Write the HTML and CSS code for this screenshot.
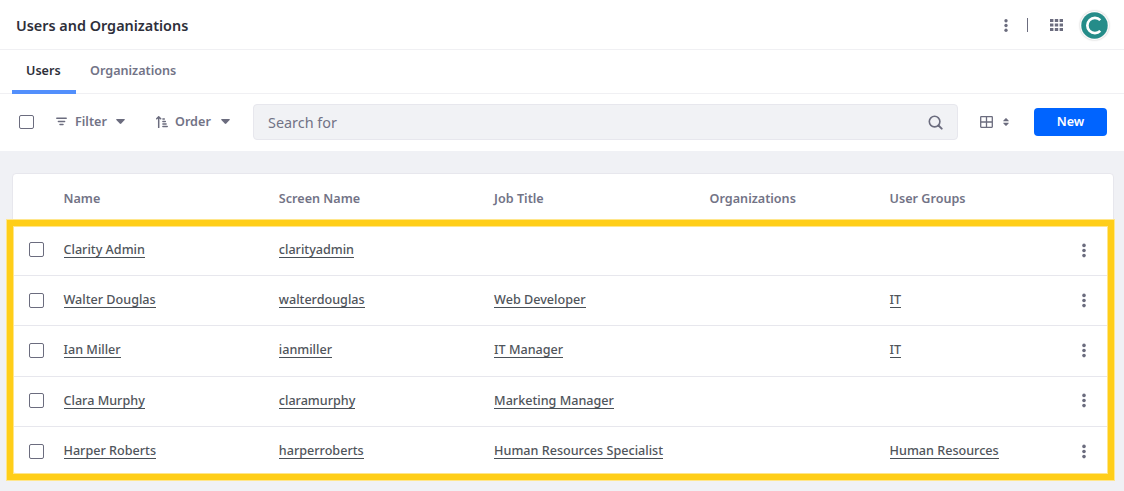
FILE: index.html
```html
<!DOCTYPE html>
<html lang="en">
<head>
<meta charset="utf-8">
<title>Users and Organizations</title>
<link rel="stylesheet" href="styles.css">
</head>
<body>
<svg class="defs" aria-hidden="true">
  <symbol id="dots" viewBox="0 0 4 14"><circle cx="2" cy="1.9" r="1.8"/><circle cx="2" cy="7" r="1.8"/><circle cx="2" cy="12.1" r="1.8"/></symbol>
  <symbol id="caret" viewBox="0 0 9 5"><path d="M.8 0h7.4q1.1 0 .4.9L5.3 4.5q-.8.8-1.6 0L.4.9Q-.3 0 .8 0z"/></symbol>
</svg>
<header class="topbar">
  <h1 class="title">Users and Organizations</h1>
  <svg class="top-dots" width="4" height="13"><use href="#dots"/></svg>
  <span class="divider"></span>
  <svg class="apps" width="13" height="12" viewBox="0 0 13 12"><path d="M0 0h3.4v3H0zM4.8 0h3.4v3H4.8zM9.6 0H13v3H9.6zM0 4.5h3.4v3H0zM4.8 4.5h3.4v3H4.8zM9.6 4.5H13v3H9.6zM0 9h3.4v3H0zM4.8 9h3.4v3H4.8zM9.6 9H13v3H9.6z"/></svg>
  <span class="avatar"><svg width="27" height="27" viewBox="0 0 27 27"><circle cx="13.5" cy="13.5" r="13.2"/><path d="M19.3 8.1A7.6 7.6 0 1 0 19.3 18.9" fill="none" stroke="#fff" stroke-width="2.7"/></svg></span>
</header>
<nav class="tabs">
  <a class="tab active">Users</a>
  <a class="tab">Organizations</a>
</nav>
<div class="toolbar">
  <span class="check"></span>
  <span class="control filter">
    <svg width="11" height="9" viewBox="0 0 11 9"><path d="M.8 1.2h9.4M2.4 4.4h6.2M4 7.6h3" fill="none" stroke="#6b6c7e" stroke-width="1.5" stroke-linecap="round"/></svg>
    <span>Filter</span>
    <svg class="caret" width="9" height="5"><use href="#caret"/></svg>
  </span>
  <span class="control order">
    <svg width="12" height="12" viewBox="0 0 12 12"><path d="M2.7 11.5V1M.7 2.7L2.7.8l2 1.9M6.9 3.1h1.4M6.9 5.6h2.4M6.9 8.1h3.2M6.9 10.5h4.3" fill="none" stroke="#6b6c7e" stroke-width="1.5" stroke-linecap="round"/></svg>
    <span>Order</span>
    <svg class="caret" width="9" height="5"><use href="#caret"/></svg>
  </span>
  <div class="search">
    <span>Search for</span>
    <svg width="15" height="15" viewBox="0 0 15 15"><circle cx="6.6" cy="6.6" r="5.3" fill="none" stroke="#6b6c7e" stroke-width="1.6"/><path d="M10.5 10.5l3.2 3.2" stroke="#6b6c7e" stroke-width="1.9" stroke-linecap="round"/></svg>
  </div>
  <svg class="grid-icon" width="13" height="12" viewBox="0 0 13 12"><path d="M.7 1.2q0-.5.5-.5h10.6q.5 0 .5.5v9.6q0 .5-.5.5H1.2q-.5 0-.5-.5zM6.5.7v10.6M.7 6h11.6" fill="none" stroke="#6b6c7e" stroke-width="1.3"/></svg>
  <svg class="sort" width="6" height="8" viewBox="0 0 6 8"><path d="M.4 3.3Q0 3.2.5 2.5L2.4.4q.6-.6 1.2 0l1.9 2.1q.5.7 0 .8zM.4 4.7h5.2q.4.1-.1.8L3.6 7.6q-.6.6-1.2 0L.5 5.5q-.5-.7-.1-.8z"/></svg>
  <button class="new">New</button>
</div>
<main class="content">
  <div class="card">
    <div class="row head"><span></span><span>Name</span><span>Screen Name</span><span>Job Title</span><span>Organizations</span><span>User Groups</span><span></span></div>
    <div class="row"><span class="check"></span><span><a>Clarity Admin</a></span><span><a>clarityadmin</a></span><span></span><span></span><span></span><svg width="4" height="15"><use href="#dots"/></svg></div>
    <div class="row"><span class="check"></span><span><a>Walter Douglas</a></span><span><a>walterdouglas</a></span><span><a>Web Developer</a></span><span></span><span><a>IT</a></span><svg width="4" height="15"><use href="#dots"/></svg></div>
    <div class="row"><span class="check"></span><span><a>Ian Miller</a></span><span><a>ianmiller</a></span><span><a>IT Manager</a></span><span></span><span><a>IT</a></span><svg width="4" height="15"><use href="#dots"/></svg></div>
    <div class="row"><span class="check"></span><span><a>Clara Murphy</a></span><span><a>claramurphy</a></span><span><a>Marketing Manager</a></span><span></span><span></span><svg width="4" height="15"><use href="#dots"/></svg></div>
    <div class="row"><span class="check"></span><span><a>Harper Roberts</a></span><span><a>harperroberts</a></span><span><a>Human Resources Specialist</a></span><span></span><span><a>Human Resources</a></span><svg width="4" height="15"><use href="#dots"/></svg></div>
    <div class="highlight"></div>
  </div>
</main>
</body>
</html>
```
FILE: styles.css
```css
* { box-sizing: border-box; }
body {
  margin: 0;
  height: 491px;
  overflow: hidden;
  display: flex;
  flex-direction: column;
  background: #f0f1f5;
  color: #727386;
  font: 600 12.6px/18px "Noto Sans", sans-serif;
}
svg { display: block; fill: #6b6c7e; flex: none; }
.defs { display: none; }
.topbar {
  flex: none;
  height: 50px;
  display: flex;
  align-items: center;
  padding: 1px 16px 0 16px;
  background: #fff;
  border-bottom: 1px solid #f0f0f3;
}
.title { margin: 1px auto 0 0; font-size: 14.4px; font-weight: 600; line-height: 20px; color: #2e2f3a; }
.divider { width: 1px; height: 14px; margin: 0 22px 0 19px; background: #6b6c7e; }
.avatar { margin-left: 18px; border-radius: 50%; box-shadow: 0 0 0 1px #fff, 0 0 2px 1px #bbb; }
.avatar svg { fill: #258c89; }
.tabs {
  flex: none;
  height: 44px;
  display: flex;
  padding-left: 12px;
  background: #fff;
  border-bottom: 1px solid #f0f0f3;
}
.tab { height: 44px; padding: 12px 14px 0; }
.tab.active { width: 64px; padding-right: 0; color: #2e2f3a; border-bottom: 4px solid #528ffc; }
.toolbar {
  flex: none;
  height: 57px;
  display: flex;
  align-items: center;
  padding: 0 17px 1px 19px;
  background: #fff;
}
.check { flex: none; width: 15px; height: 14px; border: 1px solid #6b6c7e; border-radius: 2px; background: #fff; }
.control { display: flex; align-items: center; }
.control svg { margin-bottom: 1px; }
.filter { width: 100px; margin-left: 22px; }
.filter span { margin: 0 auto 0 8px; }
.order { width: 97px; }
.filter .caret { margin-right: 31px; }
.order span { width: 37px; margin-left: 7px; }
.order .caret { margin-left: 9px; }
.search {
  width: 705px;
  height: 36px;
  margin-right: 22px;
  display: flex;
  align-items: center;
  justify-content: space-between;
  padding: 1px 14px 0;
  background: #f1f2f5;
  border: 1px solid #e7e7ed;
  border-radius: 4px;
  font-size: 14.4px;
  font-weight: 400;
}
.search svg { margin-bottom: 1px; }
.grid-icon { margin-bottom: 1px; }
.sort { margin: 0 auto 1px 10px; }
.new {
  width: 73px;
  height: 28px;
  padding: 0;
  border: 0;
  border-radius: 4px;
  background: #0064ff;
  color: #fff;
  font: inherit;
}
.content { padding: 22px 10px 0 12px; }
.card {
  position: relative;
  height: 301px;
  background: #fff;
  border: 1px solid #e7e7ed;
  border-radius: 4px;
}
.row {
  height: 50.3px;
  display: grid;
  grid-template-columns: 35px 215.3px 215.3px 215.5px 180px 192.2px 4px;
  align-items: center;
  padding-left: 15.5px;
  border-bottom: 1px solid #e7e7ed;
  color: #50555b;
  font-weight: 500;
}
.row .check { height: 15px; margin-bottom: 1px; }
.row svg { margin-bottom: .6px; }
.row:nth-child(6) { border-bottom: 0; padding-bottom: 1px; }
.head { height: 51.7px; padding-bottom: 1px; color: #727386; font-weight: 600; }
.row a { display: inline-block; line-height: 16px; height: 16px; border-bottom: 1px solid #495057; margin-bottom: 2px; }
.highlight {
  position: absolute;
  left: -6px;
  top: 46px;
  width: 1107px;
  height: 260px;
  border: 6px solid #ffce19;
  box-shadow: 0 0 0 1px #ffe68c, inset 0 0 0 1px #ffe68c;
}
```
